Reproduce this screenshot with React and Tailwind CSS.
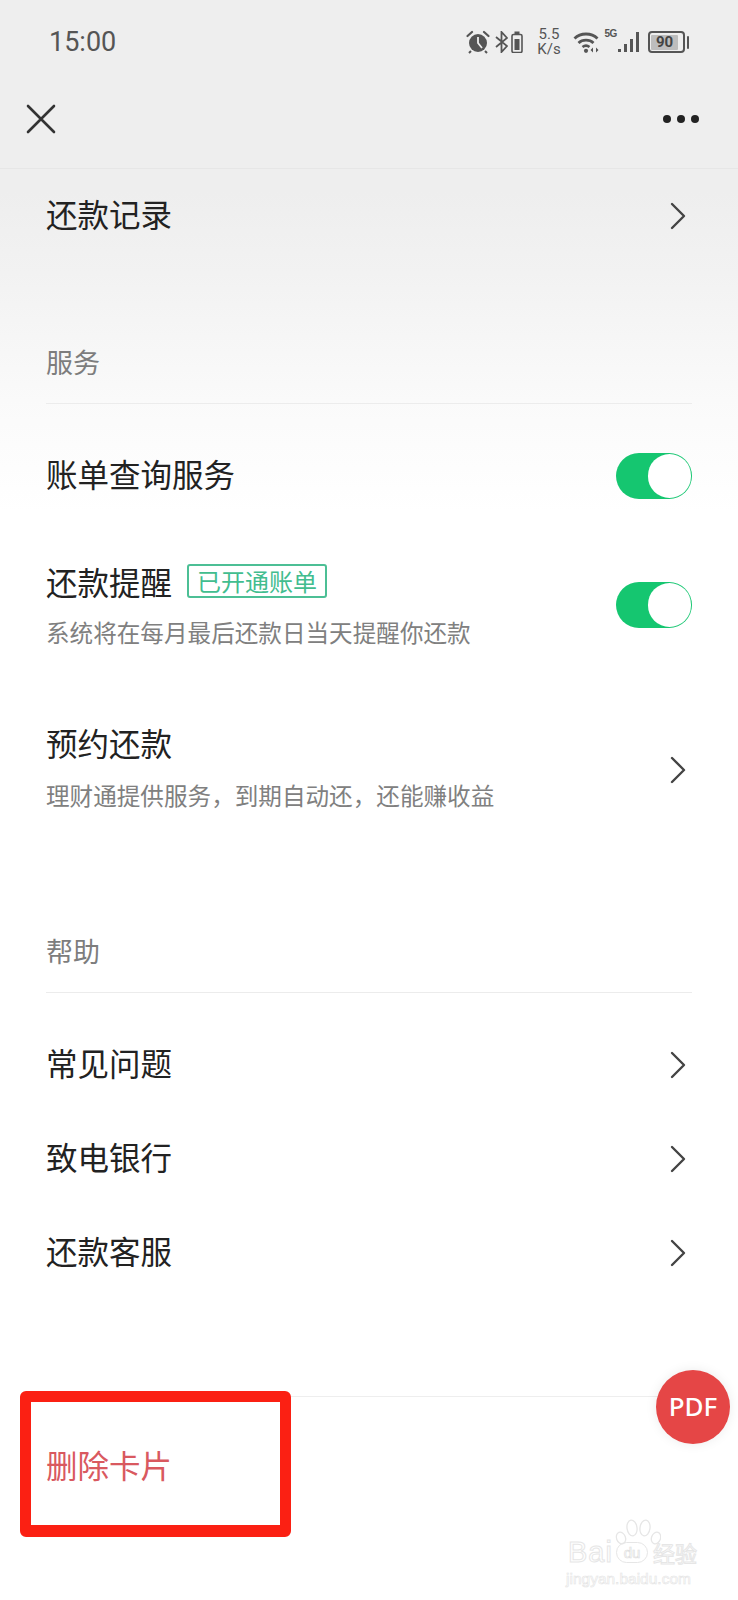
const cjk = "font-['Noto_Sans_CJK_SC','Noto_Sans',sans-serif]";

function Chevron() {
  return (
    <svg width="16" height="28" viewBox="0 0 16 28" fill="none" className="shrink-0">
      <polyline points="2,2 14,14 2,26" stroke="#444" strokeWidth="2.4" strokeLinecap="round" strokeLinejoin="round" />
    </svg>
  );
}

function Toggle() {
  return (
    <div className="w-[76px] h-[46px] rounded-full bg-[#15c670] flex items-center justify-end pr-[1px] shrink-0">
      <div className="w-[43px] h-[44px] rounded-full bg-white" />
    </div>
  );
}

function LinkRow({ label }) {
  return (
    <div className="h-[94px] flex items-center justify-between pr-[6px]">
      <span className="mb-[7px] text-[31.5px] leading-[40px] text-[#222]">{label}</span>
      <Chevron />
    </div>
  );
}

function SectionTitle({ label, className }) {
  return (
    <div className={`border-b border-[#ececec] ${className}`}>
      <span className="block text-[27px] leading-[36px] text-[#7d7d7d]">{label}</span>
    </div>
  );
}

function StatusIcons() {
  return (
    <div className="flex items-center text-[#555]">
      {/* alarm */}
      <svg width="24" height="24" viewBox="0 0 24 24" className="mr-[5px]">
        <circle cx="12" cy="13" r="9" fill="#555" />
        <path d="M12 7v6l4 5" stroke="#eee" strokeWidth="1.8" fill="none" />
        <path d="M1.5 6L6 2M22.5 6L18 2" stroke="#555" strokeWidth="2.2" strokeLinecap="round" />
        <path d="M5 21l-2 2M19 21l2 2" stroke="#555" strokeWidth="2" />
      </svg>
      {/* bluetooth */}
      <svg width="13" height="22" viewBox="0 0 13 22" fill="none" className="mr-[3px]">
        <path d="M1 6l11 9-5.5 6V1L12 7 1 16" stroke="#555" strokeWidth="1.8" />
      </svg>
      {/* small battery */}
      <svg width="12" height="22" viewBox="0 0 12 22" className="mr-[14px]">
        <rect x="3.5" y="0.5" width="5" height="2.5" fill="#555" />
        <rect x="1" y="3.5" width="10" height="18" rx="1.5" fill="none" stroke="#555" strokeWidth="1.6" />
        <rect x="3.5" y="8" width="5" height="11" fill="#555" />
      </svg>
      <div className="flex flex-col items-center w-[25px] mr-[11px] text-[15px] leading-[15px] font-['Roboto',sans-serif] text-[#555]">
        <span>5.5</span>
        <span>K/s</span>
      </div>
      {/* wifi */}
      <svg width="27" height="22" viewBox="0 0 27 22" fill="none" className="mr-[5px]">
        <path d="M1.5 7.5C7.5 1.5 18.5 1.5 24.5 7.5" stroke="#555" strokeWidth="2.8" />
        <path d="M5.5 12C9.5 8.2 16.5 8.2 20.5 12" stroke="#555" strokeWidth="2.8" />
        <path d="M9.5 16C11.5 14.4 14.5 14.4 16.5 16" stroke="#555" strokeWidth="2.6" />
        <circle cx="13" cy="19.8" r="2.1" fill="#555" />
        <path d="M20 16.5l-2.5 2.5 2.5 2.5zM23 16.5l2.5 2.5-2.5 2.5z" fill="#555" />
      </svg>
      <span className="self-start mt-[1px] w-[12px] text-[10px] leading-[11px] font-bold font-['Liberation_Sans',sans-serif] text-[#555] tracking-[-0.5px]">5G</span>
      {/* signal */}
      <svg width="23" height="22" viewBox="0 0 23 22" className="mr-[8px]">
        <rect x="1" y="18" width="3" height="3" fill="#555" />
        <rect x="7" y="13" width="3" height="8" fill="#555" />
        <rect x="13" y="8" width="3" height="13" fill="#555" />
        <rect x="19" y="1" width="3" height="20" fill="#555" />
      </svg>
      {/* battery */}
      <div className="w-[37px] h-[22px] rounded-[4px] border-[2px] border-[#555] p-[1.5px] mr-[2px]">
        <div className="w-[27px] h-full rounded-[1px] bg-[#bdbdbd] flex items-center justify-center">
          <span className="text-[15px] leading-none font-bold font-['Roboto',sans-serif] text-[#444]">90</span>
        </div>
      </div>
      <div className="w-[2.5px] h-[13px] rounded-full bg-[#555]" />
    </div>
  );
}

function Watermark() {
  return (
    <div className="absolute left-[568px] top-[1519px] w-[134px] text-white [-webkit-text-stroke:1px_#e6e6e6]">
      {/* paw toes */}
      <svg width="46" height="28" viewBox="0 0 46 28" fill="none" stroke="#e6e6e6" strokeWidth="1.3" className="absolute left-[47px] top-0">
        <ellipse cx="6" cy="19" rx="4.5" ry="6" transform="rotate(-20 6 19)" />
        <ellipse cx="17" cy="9" rx="5" ry="8" transform="rotate(-8 17 9)" />
        <ellipse cx="30" cy="9" rx="5" ry="8" transform="rotate(8 30 9)" />
        <ellipse cx="41" cy="19" rx="4.5" ry="6" transform="rotate(20 41 19)" />
      </svg>
      <div className="flex items-center h-[26px] mt-[20px] leading-none">
        <span className="w-[48px] text-[29px] font-['Liberation_Sans',sans-serif] tracking-[1px]">Bai</span>
        <span className="w-[32px] h-[21px] rounded-full border border-[#e6e6e6] flex items-center justify-center text-[15px] font-['Liberation_Sans',sans-serif] [-webkit-text-stroke:0.7px_#e0e0e0]">du</span>
        <span className={`ml-[5px] text-[22px] ${cjk}`}>经验</span>
      </div>
      <span className="block -ml-[2px] mt-[5px] text-[15.5px] leading-[18px] font-['Liberation_Sans',sans-serif] [-webkit-text-stroke:0.6px_#e4e4e4]">jingyan.baidu.com</span>
    </div>
  );
}

export default function App() {
  return (
    <div className={`relative w-[738px] h-[1600px] overflow-hidden bg-white ${cjk}`}>
      <div className="bg-[linear-gradient(to_bottom,#eeeeee_0%,#eeeeee_12%,#f2f2f2_17%,#fafafa_25%,#ffffff_32%,#ffffff_100%)] h-full">
        {/* status bar */}
        <div className="h-[84px] pl-[49px] pr-[49px] flex items-center justify-between">
          <span className="mt-[1px] text-[27px] leading-none font-['Roboto',sans-serif] text-[#555]">15:00</span>
          <StatusIcons />
        </div>

        {/* nav */}
        <div className="h-[85px] border-b border-[#e6e6e6] pl-[26px] pr-[39px] flex items-center justify-between pb-[15px] pt-0">
          <svg width="30" height="30" viewBox="0 0 30 30" fill="none">
            <path d="M2 2l26 26M28 2L2 28" stroke="#333" strokeWidth="2.6" strokeLinecap="round" />
          </svg>
          <div className="flex gap-[6px]">
            <div className="w-[8px] h-[8px] rounded-full bg-[#222]" />
            <div className="w-[8px] h-[8px] rounded-full bg-[#222]" />
            <div className="w-[8px] h-[8px] rounded-full bg-[#222]" />
          </div>
        </div>

        <div className="pl-[46px] pr-[46px]">
          <LinkRow label="还款记录" />

          <SectionTitle label="服务" className="h-[141px] pt-[81px]" />

          <div className="h-[143px] flex items-center justify-between">
            <span className="mb-[6px] text-[31.5px] leading-[40px] text-[#222]">账单查询服务</span>
            <Toggle />
          </div>

          <div className="h-[116px] flex items-center justify-between">
            <div className="flex flex-col gap-[16px] mb-[3px]">
              <div className="flex items-center gap-[15px] h-[40px]">
                <span className="text-[31.5px] leading-[40px] text-[#222]">还款提醒</span>
                <span className="h-[34px] px-[8px] rounded-[3px] border-[2px] border-[#4cbf95] text-[24px] leading-[29px] text-[#42bd8f]">已开通账单</span>
              </div>
              <span className="text-[23.6px] leading-[30px] text-[#808080]">系统将在每月最后还款日当天提醒你还款</span>
            </div>
            <Toggle />
          </div>

          <div className="h-[213px] flex items-center justify-between pr-[6px]">
            <div className="flex flex-col gap-[18px] mb-[7px]">
              <span className="text-[31.5px] leading-[40px] text-[#222]">预约还款</span>
              <span className="text-[23.6px] leading-[30px] text-[#808080]">理财通提供服务，到期自动还，还能赚收益</span>
            </div>
            <Chevron />
          </div>

          <SectionTitle label="帮助" className="h-[117px] pt-[57px]" />

          <div className="mt-[25px]">
            <LinkRow label="常见问题" />
            <LinkRow label="致电银行" />
            <LinkRow label="还款客服" />
          </div>

          <div className="mt-[96px] border-b border-[#eeeeee]" />

          <div className="h-[138px] flex items-center">
            <span className="mb-[4px] text-[31.5px] leading-[40px] text-[#d9595f]">删除卡片</span>
          </div>
        </div>
      </div>

      {/* red annotation box */}
      <div className="absolute left-[20px] top-[1391px] w-[271px] h-[146px] rounded-[6px] border-x-[11px] border-t-[11px] border-b-[12px] border-[#fb2013]" />

      {/* floating PDF button */}
      <div className="absolute left-[656px] top-[1370px] w-[74px] h-[74px] rounded-full bg-[#e54646] flex items-center justify-center shadow-[0_0_12px_rgba(0,0,0,0.08)]">
        <span className="mb-[2px] text-[26px] font-medium text-white font-['Noto_Sans',sans-serif]">PDF</span>
      </div>

      <Watermark />
    </div>
  );
}
